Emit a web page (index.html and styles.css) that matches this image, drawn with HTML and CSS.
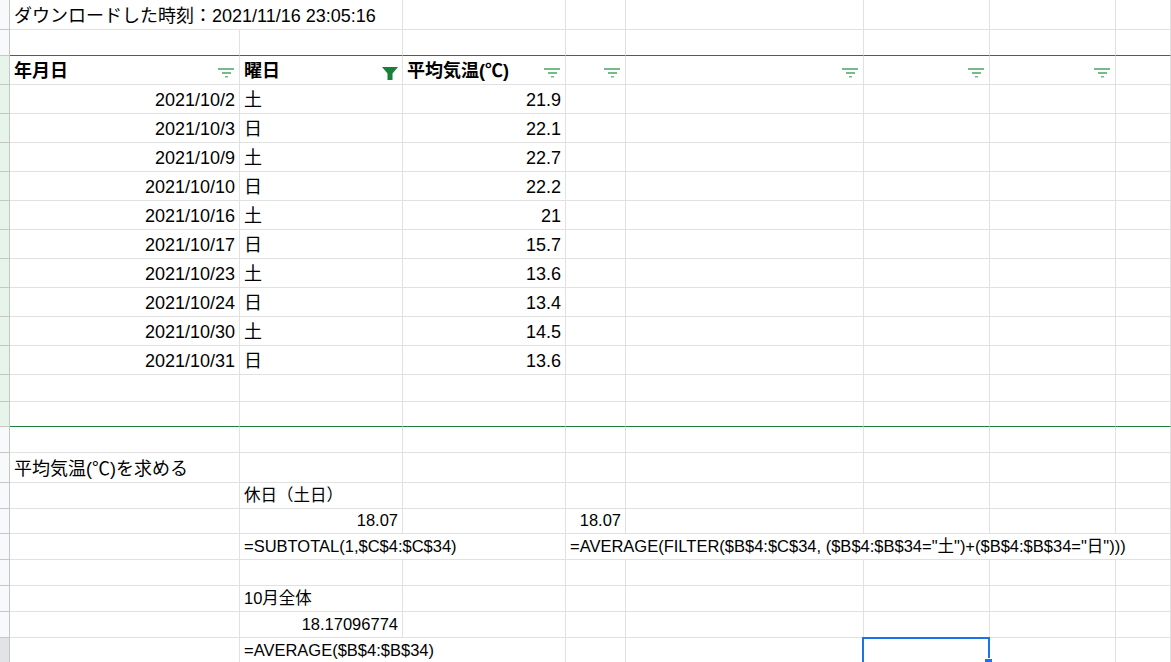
FILE: index.html
```html
<!DOCTYPE html>
<html lang="ja">
<head>
  <meta charset="UTF-8" />
  <meta name="viewport" content="width=device-width, initial-scale=1.0"/>
  <title>平均気温 - スプレッドシート</title>

  <link rel="stylesheet" href="styles.css">
</head>
<body>
  <div class="sheet">

    <!-- 1 -->
    <div class="row r30 big">
      <div class="rh"></div>
      <div class="cell span2">ダウンロードした時刻：2021/11/16 23:05:16</div>
      <div class="cell"></div><div class="cell"></div><div class="cell"></div>
      <div class="cell"></div><div class="cell"></div><div class="cell"></div>
    </div>

    <!-- 2 -->
    <div class="row r26 edge">
      <div class="rh"></div>
      <div class="cell"></div><div class="cell"></div><div class="cell"></div><div class="cell"></div>
      <div class="cell"></div><div class="cell"></div><div class="cell"></div><div class="cell"></div>
    </div>

    <!-- 3: filter header -->
    <div class="row r29 big head">
      <div class="rh on"></div>
      <div class="cell hd">年月日
        <svg class="flt" width="16" height="10" viewBox="0 0 16 10"><rect width="16" height="2"/><rect x="4" y="4" width="9" height="2"/><rect x="7" y="8" width="3" height="1.5"/></svg>
      </div>
      <div class="cell hd">曜日
        <svg class="funnel" width="16" height="13" viewBox="0 0 16 13"><path d="M0 0H16L10.5 6.5V13H5.5V6.5Z"/></svg>
      </div>
      <div class="cell hd">平均気温(℃)
        <svg class="flt" width="16" height="10" viewBox="0 0 16 10"><rect width="16" height="2"/><rect x="4" y="4" width="9" height="2"/><rect x="7" y="8" width="3" height="1.5"/></svg>
      </div>
      <div class="cell hd end">
        <svg class="flt" width="16" height="10" viewBox="0 0 16 10"><rect width="16" height="2"/><rect x="4" y="4" width="9" height="2"/><rect x="7" y="8" width="3" height="1.5"/></svg>
      </div>
      <div class="cell hd end">
        <svg class="flt" width="16" height="10" viewBox="0 0 16 10"><rect width="16" height="2"/><rect x="4" y="4" width="9" height="2"/><rect x="7" y="8" width="3" height="1.5"/></svg>
      </div>
      <div class="cell hd end">
        <svg class="flt" width="16" height="10" viewBox="0 0 16 10"><rect width="16" height="2"/><rect x="4" y="4" width="9" height="2"/><rect x="7" y="8" width="3" height="1.5"/></svg>
      </div>
      <div class="cell hd end">
        <svg class="flt" width="16" height="10" viewBox="0 0 16 10"><rect width="16" height="2"/><rect x="4" y="4" width="9" height="2"/><rect x="7" y="8" width="3" height="1.5"/></svg>
      </div>
      <div class="cell"></div>
    </div>

    <!-- 4-13: data -->
    <div class="row r29 big">
      <div class="rh on"></div>
      <div class="cell num">2021/10/2</div><div class="cell">土</div><div class="cell num">21.9</div>
      <div class="cell"></div><div class="cell"></div><div class="cell"></div><div class="cell"></div><div class="cell"></div>
    </div>
    <div class="row r29 big">
      <div class="rh on"></div>
      <div class="cell num">2021/10/3</div><div class="cell">日</div><div class="cell num">22.1</div>
      <div class="cell"></div><div class="cell"></div><div class="cell"></div><div class="cell"></div><div class="cell"></div>
    </div>
    <div class="row r29 big">
      <div class="rh on"></div>
      <div class="cell num">2021/10/9</div><div class="cell">土</div><div class="cell num">22.7</div>
      <div class="cell"></div><div class="cell"></div><div class="cell"></div><div class="cell"></div><div class="cell"></div>
    </div>
    <div class="row r29 big">
      <div class="rh on"></div>
      <div class="cell num">2021/10/10</div><div class="cell">日</div><div class="cell num">22.2</div>
      <div class="cell"></div><div class="cell"></div><div class="cell"></div><div class="cell"></div><div class="cell"></div>
    </div>
    <div class="row r29 big">
      <div class="rh on"></div>
      <div class="cell num">2021/10/16</div><div class="cell">土</div><div class="cell num">21</div>
      <div class="cell"></div><div class="cell"></div><div class="cell"></div><div class="cell"></div><div class="cell"></div>
    </div>
    <div class="row r29 big">
      <div class="rh on"></div>
      <div class="cell num">2021/10/17</div><div class="cell">日</div><div class="cell num">15.7</div>
      <div class="cell"></div><div class="cell"></div><div class="cell"></div><div class="cell"></div><div class="cell"></div>
    </div>
    <div class="row r29 big">
      <div class="rh on"></div>
      <div class="cell num">2021/10/23</div><div class="cell">土</div><div class="cell num">13.6</div>
      <div class="cell"></div><div class="cell"></div><div class="cell"></div><div class="cell"></div><div class="cell"></div>
    </div>
    <div class="row r29 big">
      <div class="rh on"></div>
      <div class="cell num">2021/10/24</div><div class="cell">日</div><div class="cell num">13.4</div>
      <div class="cell"></div><div class="cell"></div><div class="cell"></div><div class="cell"></div><div class="cell"></div>
    </div>
    <div class="row r29 big">
      <div class="rh on"></div>
      <div class="cell num">2021/10/30</div><div class="cell">土</div><div class="cell num">14.5</div>
      <div class="cell"></div><div class="cell"></div><div class="cell"></div><div class="cell"></div><div class="cell"></div>
    </div>
    <div class="row r29 big">
      <div class="rh on"></div>
      <div class="cell num">2021/10/31</div><div class="cell">日</div><div class="cell num">13.6</div>
      <div class="cell"></div><div class="cell"></div><div class="cell"></div><div class="cell"></div><div class="cell"></div>
    </div>

    <!-- 14-15 -->
    <div class="row r27">
      <div class="rh on"></div>
      <div class="cell"></div><div class="cell"></div><div class="cell"></div><div class="cell"></div>
      <div class="cell"></div><div class="cell"></div><div class="cell"></div><div class="cell"></div>
    </div>
    <div class="row r25 edge">
      <div class="rh on"></div>
      <div class="cell"></div><div class="cell"></div><div class="cell"></div><div class="cell"></div>
      <div class="cell"></div><div class="cell"></div><div class="cell"></div><div class="cell"></div>
    </div>

    <!-- 16 -->
    <div class="row r26">
      <div class="rh"></div>
      <div class="cell"></div><div class="cell"></div><div class="cell"></div><div class="cell"></div>
      <div class="cell"></div><div class="cell"></div><div class="cell"></div><div class="cell"></div>
    </div>

    <!-- 17 -->
    <div class="row r30 big">
      <div class="rh"></div>
      <div class="cell">平均気温(℃)を求める</div><div class="cell"></div><div class="cell"></div><div class="cell"></div>
      <div class="cell"></div><div class="cell"></div><div class="cell"></div><div class="cell"></div>
    </div>

    <!-- 18 -->
    <div class="row r26">
      <div class="rh"></div>
      <div class="cell"></div><div class="cell">休日（土日）</div><div class="cell"></div><div class="cell"></div>
      <div class="cell"></div><div class="cell"></div><div class="cell"></div><div class="cell"></div>
    </div>

    <!-- 19 -->
    <div class="row r25">
      <div class="rh"></div>
      <div class="cell"></div><div class="cell num">18.07</div><div class="cell"></div><div class="cell num">18.07</div>
      <div class="cell"></div><div class="cell"></div><div class="cell"></div><div class="cell"></div>
    </div>

    <!-- 20 -->
    <div class="row r26">
      <div class="rh"></div>
      <div class="cell"></div>
      <div class="cell span2">=SUBTOTAL(1,$C$4:$C$34)</div>
      <div class="cell span5">=AVERAGE(FILTER($B$4:$C$34, ($B$4:$B$34="土")+($B$4:$B$34="日")))</div>
    </div>

    <!-- 21 -->
    <div class="row r26">
      <div class="rh"></div>
      <div class="cell"></div><div class="cell"></div><div class="cell"></div><div class="cell"></div>
      <div class="cell"></div><div class="cell"></div><div class="cell"></div><div class="cell"></div>
    </div>

    <!-- 22 -->
    <div class="row r26">
      <div class="rh"></div>
      <div class="cell"></div><div class="cell">10月全体</div><div class="cell"></div><div class="cell"></div>
      <div class="cell"></div><div class="cell"></div><div class="cell"></div><div class="cell"></div>
    </div>

    <!-- 23 -->
    <div class="row r26">
      <div class="rh"></div>
      <div class="cell"></div><div class="cell num">18.17096774</div><div class="cell"></div><div class="cell"></div>
      <div class="cell"></div><div class="cell"></div><div class="cell"></div><div class="cell"></div>
    </div>

    <!-- 24 -->
    <div class="row r26">
      <div class="rh sel"></div>
      <div class="cell"></div>
      <div class="cell span2">=AVERAGE($B$4:$B$34)</div>
      <div class="cell"></div><div class="cell"></div>
      <div class="cell"></div><div class="cell"></div><div class="cell"></div>
    </div>

    <!-- active cell F24 -->
    <div class="cursor"><span class="handle"></span></div>
  </div>
</body>
</html>
```

FILE: styles.css
```css
:root {
  --grid-line: #e1e1e1;
  --head-line: #c4c7c5;
  --head-bg: #f8f9fa;
  --head-on: #e6f4ea;
  --head-sel: #e1e3e6;
  --filter-green: #188038;
  --filter-light: #74bb89;
  --select-blue: #1a73e8;
}

body {
  margin: 0;
  background: #fff;
  color: #000;
  font-family: "Liberation Sans", "Noto Sans CJK JP", sans-serif;
  font-size: 16.5px;
  overflow: hidden;
}

.sheet {
  position: relative;
  width: 1171px;
  height: 662px;
  overflow: hidden;
}

.row {
  display: grid;
  grid-template-columns: 10px 230px 163px 163px 60px 238px 126px 126px 1fr;
}

.r25 { height: 25px; }
.r26 { height: 26px; }
.r27 { height: 27px; }
.r29 { height: 29px; }
.r30 { height: 30px; }

.big { font-size: 18px; }

.rh {
  background: var(--head-bg);
  border-right: 1px solid var(--head-line);
  border-bottom: 1px solid var(--head-line);
}

.rh.on { background: var(--head-on); }
.rh.sel { background: var(--head-sel); }

.cell {
  display: flex;
  align-items: flex-end;
  min-width: 0;
  padding: 0 4px 3px;
  line-height: 20px;
  white-space: nowrap;
  border-right: 1px solid var(--grid-line);
  border-bottom: 1px solid var(--grid-line);
}

.num { justify-content: flex-end; }

.span2 { grid-column: span 2; }
.span5 { grid-column: span 5; }

.edge .cell { border-bottom-color: var(--filter-green); }

.hd {
  justify-content: space-between;
  padding-right: 5px;
  font-weight: bold;
}

.hd.end { justify-content: flex-end; }

.flt {
  display: block;
  flex-shrink: 0;
  margin-bottom: 3px;
  fill: var(--filter-light);
}

.funnel {
  display: block;
  flex-shrink: 0;
  margin: 0 -1px 1px 0;
  fill: var(--filter-green);
}

.cursor {
  position: absolute;
  left: 862px;
  top: 637px;
  width: 128px;
  height: 28px;
  box-sizing: border-box;
  border: 2px solid var(--select-blue);
}

.handle {
  position: absolute;
  right: -5px;
  top: 19px;
  width: 7px;
  height: 7px;
  background: var(--select-blue);
  border: 1px solid #fff;
}
```
